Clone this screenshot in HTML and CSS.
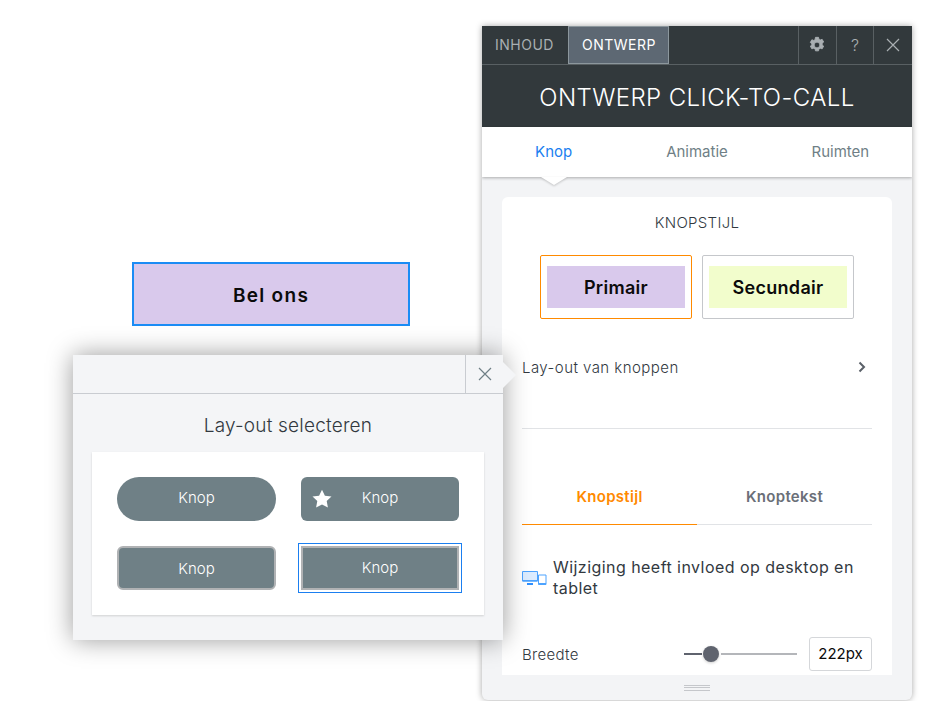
FILE: index.html
```html
<!DOCTYPE html>
<html lang="en">

<head>
    <meta charset="UTF-8">
    <meta name="viewport" content="width=device-width, initial-scale=1.0">
    <title>Ontwerp Click-to-Call</title>
    <link rel="stylesheet" href="styles.css">
</head>

<body>
    <!-- Widget on the canvas -->
    <button class="call-button">Bel ons</button>

    <!-- Settings panel -->
    <div class="panel">
        <div class="topbar">
            <div class="topbar-tab">INHOUD</div>
            <div class="topbar-tab active">ONTWERP</div>
            <div class="topbar-space"></div>
            <div class="topbar-icon gear">
                <svg width="18" height="18" viewBox="0 0 20 20">
                    <path fill="#a9afb2" fill-rule="evenodd" stroke="#a9afb2" stroke-width="1" stroke-linejoin="round" d="M8.300 1.500h3.400l.5 2.300 1.300.7 2.200-.8 1.700 3-1.700 1.500v1.600l1.700 1.500-1.700 3-2.200-.8-1.300.7-.5 2.300H8.300l-.5-2.300-1.300-.7-2.200.8-1.700-3 1.700-1.500V8.700L2.600 7.200l1.700-3 2.200.8 1.300-.7zM10 6.800a3.200 3.200 0 1 0 0 6.400 3.200 3.200 0 0 0 0-6.400z"/>
                </svg>
            </div>
            <div class="topbar-icon help">?</div>
            <div class="topbar-icon close">
                <svg width="14" height="14" viewBox="0 0 14 14">
                    <path d="M1 1l12 12M13 1L1 13" stroke="#a9afb2" stroke-width="1.200" fill="none"/>
                </svg>
            </div>
        </div>

        <h1 class="panel-title">ONTWERP CLICK-TO-CALL</h1>

        <div class="nav">
            <div class="nav-item active">Knop</div>
            <div class="nav-item">Animatie</div>
            <div class="nav-item">Ruimten</div>
        </div>

        <div class="panel-body">
            <div class="card">
                <h2 class="card-title">KNOPSTIJL</h2>

                <div class="style-row">
                    <div class="style-option selected">
                        <div class="style-swatch primary">Primair</div>
                    </div>
                    <div class="style-option">
                        <div class="style-swatch secondary">Secundair</div>
                    </div>
                </div>

                <div class="layout-link">
                    <span>Lay-out van knoppen</span>
                    <svg width="8" height="12" viewBox="0 0 8 12">
                        <path d="M1.500 1.500L6 6l-4.500 4.500" stroke="#5a6068" stroke-width="2" fill="none"/>
                    </svg>
                </div>

                <div class="subtabs">
                    <div class="subtab active">Knopstijl</div>
                    <div class="subtab">Knoptekst</div>
                </div>

                <div class="notice">
                    <svg class="notice-icon" width="25" height="16" viewBox="0 0 25 16">
                        <path d="M.5 1.500h15v9.500H.5z" fill="#dcecff" stroke="#4da3ff"/>
                        <path d="M.5 10h15v1.500H.5z" fill="#4da3ff"/>
                        <path d="M5 14h6" stroke="#2f90ff" stroke-width="2"/>
                        <path d="M16.500 5h7.500v9.500h-7.500z" fill="#fff" stroke="#4da3ff"/>
                        <path d="M16.500 13h7.500v1.500h-7.500z" fill="#4da3ff"/>
                    </svg>
                    <p>Wijziging heeft invloed op desktop en tablet</p>
                </div>

                <div class="width-row">
                    <span>Breedte</span>
                    <div class="slider">
                        <div class="slider-fill"></div>
                        <div class="slider-knob"></div>
                        <div class="slider-rest"></div>
                    </div>
                    <div class="width-input">222px</div>
                </div>
            </div>
        </div>

        <div class="panel-footer">
            <div class="grip"></div>
        </div>
    </div>

    <!-- Layout popup -->
    <div class="popup">
        <div class="popup-head">
            <div class="popup-close">
                <svg width="14" height="14" viewBox="0 0 14 14">
                    <path d="M1 1l12 12M13 1L1 13" stroke="#6f7f86" stroke-width="1.200" fill="none"/>
                </svg>
            </div>
        </div>
        <h3 class="popup-title">Lay-out selecteren</h3>
        <div class="layout-grid">
            <div class="layout-btn pill">Knop</div>
            <div class="layout-btn icon">
                <svg class="star" width="20" height="20" viewBox="0 0 20 20">
                    <path fill="#fff" d="M10 .8l2.900 6 6.600.8-4.800 4.500 1.200 6.500L10 15.400l-5.900 3.200 1.200-6.500L.5 7.600l6.600-.8z"/>
                </svg>
                Knop
            </div>
            <div class="layout-btn outlined">Knop</div>
            <div class="layout-btn square">Knop</div>
        </div>
    </div>
</body>

</html>
```

FILE: styles.css
```css
* {
    box-sizing: border-box;
}

body {
    font-family: Inter, "Noto Sans", sans-serif;
    margin: 0;
    width: 932px;
    height: 701px;
    position: relative;
    overflow: hidden;
    background-color: white;
    color: #32393f;
}

h1,
h2,
h3,
p {
    margin: 0;
    font-weight: 400;
}

.call-button {
    position: absolute;
    left: 132px;
    top: 262px;
    width: 278px;
    height: 64px;
    padding: 3px 0 0;
    border: 2px solid #1b8cf5;
    background-color: #d9c9ec;
    color: #0b0b0b;
    font-family: Inter, sans-serif;
    font-size: 19px;
    font-weight: 600;
    letter-spacing: 1.3px;
}

/* Panel */
.panel {
    position: absolute;
    left: 482px;
    top: 26px;
    width: 430px;
    height: 674px;
    display: flex;
    flex-direction: column;
    background-color: #f3f4f6;
    border-radius: 0 0 6px 6px;
    box-shadow: 0 0 6px rgba(0, 0, 0, 0.35);
    overflow: hidden;
}

.topbar {
    display: flex;
    height: 39px;
    background-color: #32393c;
    border-bottom: 1px solid #596063;
}

.topbar-tab {
    display: flex;
    align-items: center;
    width: 86px;
    padding: 0 13px 2px;
    font-size: 14px;
    letter-spacing: 0.5px;
    color: #a9afb2;
}

.topbar-tab.active {
    width: 101px;
    color: white;
    background-color: #5d6873;
    border: 1px solid #8c979d;
}

.topbar-space {
    flex: 1;
}

.topbar-icon {
    display: flex;
    align-items: center;
    justify-content: center;
    border-left: 1px solid #596063;
    color: #a9afb2;
    font-size: 16px;
    font-weight: 300;
}

.gear {
    width: 38px;
    padding-right: 2px;
}

.help {
    width: 37px;
}

.close {
    width: 39px;
}

.panel-title {
    height: 62px;
    background-color: #32393c;
    color: white;
    font-size: 24px;
    font-weight: 300;
    letter-spacing: 0.4px;
    line-height: 66px;
    text-align: center;
}

.nav {
    position: relative;
    display: grid;
    grid-template-columns: repeat(3, 1fr);
    height: 50px;
    background-color: white;
    box-shadow: 0 1px 3px rgba(0, 0, 0, 0.3);
    font-size: 15px;
    line-height: 50px;
    text-align: center;
    color: #6f7f86;
}

.nav-item.active {
    color: #1b7ff0;
}

.nav::after {
    content: "";
    position: absolute;
    left: 59px;
    bottom: -8px;
    width: 0;
    height: 0;
    border-left: 13px solid transparent;
    border-right: 13px solid transparent;
    border-top: 8px solid white;
    filter: drop-shadow(0 1px 1px rgba(0, 0, 0, 0.2));
}

.panel-body {
    flex: 1;
    min-height: 0;
    padding: 20px 20px 0;
}

.card {
    height: 100%;
    padding: 17px 20px 0;
    background-color: white;
    border-radius: 6px 6px 0 0;
    overflow: hidden;
}

.card-title {
    font-size: 15px;
    font-weight: 300;
    letter-spacing: 0.3px;
    line-height: 18px;
    text-align: center;
}

.style-row {
    display: flex;
    justify-content: center;
    gap: 10px;
    margin-top: 23px;
}

.style-option {
    width: 152px;
    height: 64px;
    padding: 10px 6px;
    border: 1px solid #c5c7cb;
    border-radius: 2px;
}

.style-option.selected {
    border-color: #ff8a00;
}

.style-swatch {
    height: 42px;
    padding-top: 2px;
    line-height: 40px;
    text-align: center;
    font-size: 18px;
    font-weight: 600;
    letter-spacing: 0.3px;
    color: #0b0b0b;
}

.primary {
    background-color: #d9c9ec;
}

.secondary {
    background-color: #f2fdcc;
}

.layout-link {
    display: flex;
    align-items: center;
    justify-content: space-between;
    height: 110px;
    padding: 0 6px 13px 0;
    border-bottom: 1px solid #e1e3e6;
    font-size: 15px;
    font-weight: 350;
    letter-spacing: 0.45px;
}

.subtabs {
    display: flex;
    height: 96px;
    padding-top: 50px;
    border-bottom: 1px solid #e1e3e6;
}

.subtab {
    width: 175px;
    height: 46px;
    text-align: center;
    font-size: 15px;
    font-weight: 600;
    letter-spacing: 0.3px;
    line-height: 36px;
    color: #6a6f78;
}

.subtab.active {
    color: #ff8a00;
    border-bottom: 1px solid #ff8a00;
}

.notice {
    display: flex;
    gap: 6px;
    margin-top: 32px;
    font-size: 16px;
    font-weight: 350;
    letter-spacing: 0.45px;
    line-height: 21px;
}

.notice-icon {
    flex-shrink: 0;
    margin-top: 13px;
}

.width-row {
    display: flex;
    align-items: center;
    margin-top: 38px;
    font-size: 15px;
    font-weight: 350;
    letter-spacing: 0.3px;
}

.width-row span {
    width: 162px;
}

.slider {
    display: flex;
    align-items: center;
    width: 113px;
}

.slider-fill {
    width: 18px;
    height: 2px;
    background-color: #5f636e;
}

.slider-knob {
    width: 16px;
    height: 16px;
    margin: 0 2px 0 1px;
    border-radius: 50%;
    background-color: #5f636e;
    box-shadow: 0 1px 3px rgba(0, 0, 0, 0.2);
}

.slider-rest {
    flex: 1;
    height: 2px;
    background-color: #b4b6ba;
}

.width-input {
    width: 63px;
    height: 34px;
    margin-left: 12px;
    border: 1px solid #d5d7da;
    border-radius: 3px;
    font-size: 15px;
    font-weight: 400;
    letter-spacing: 0;
    line-height: 32px;
    text-align: center;
    color: #0b0b0b;
}

.panel-footer {
    display: flex;
    align-items: center;
    justify-content: center;
    height: 25px;
}

.grip {
    width: 26px;
    height: 6px;
    border-top: 1px solid #c5c7cb;
    border-bottom: 1px solid #c5c7cb;
    background: linear-gradient(#c5c7cb, #c5c7cb) center / 100% 1px no-repeat;
}

/* Popup */
.popup {
    position: absolute;
    left: 73px;
    top: 355px;
    width: 430px;
    height: 285px;
    background-color: #f4f5f7;
    box-shadow: 0 0 24px rgba(0, 0, 0, 0.4);
}

.popup::after {
    content: "";
    position: absolute;
    left: 430px;
    top: 7px;
    border-top: 13px solid transparent;
    border-bottom: 13px solid transparent;
    border-left: 13px solid #f4f5f7;
}

.popup-head {
    display: flex;
    justify-content: flex-end;
    height: 39px;
    border-bottom: 1px solid #c9ccd1;
}

.popup-close {
    display: flex;
    align-items: center;
    justify-content: center;
    width: 38px;
    border-left: 1px solid #c9ccd1;
}

.popup-title {
    height: 58px;
    font-size: 19px;
    font-weight: 350;
    letter-spacing: 0.2px;
    line-height: 64px;
    text-align: center;
}

.layout-grid {
    display: grid;
    grid-template-columns: 159px 158px;
    grid-auto-rows: 44px;
    gap: 25px;
    height: 163px;
    margin: 0 19px;
    padding: 25px;
    background-color: white;
    box-shadow: 0 1px 2px rgba(0, 0, 0, 0.15);
}

.layout-btn {
    position: relative;
    display: flex;
    align-items: center;
    justify-content: center;
    background-color: #6f8086;
    color: white;
    font-size: 15px;
    font-weight: 300;
}

.pill {
    border-radius: 22px;
    padding-bottom: 3px;
}

.icon {
    border-radius: 6px;
    padding-bottom: 3px;
}

.star {
    position: absolute;
    left: 11px;
    top: 12px;
}

.outlined {
    border: 2px solid #b0b2b4;
    border-radius: 6px;
}

.square {
    border: 2px solid #b0b2b4;
    outline: 1px solid #1b7ff0;
    outline-offset: 2px;
    padding-bottom: 2px;
}
```
